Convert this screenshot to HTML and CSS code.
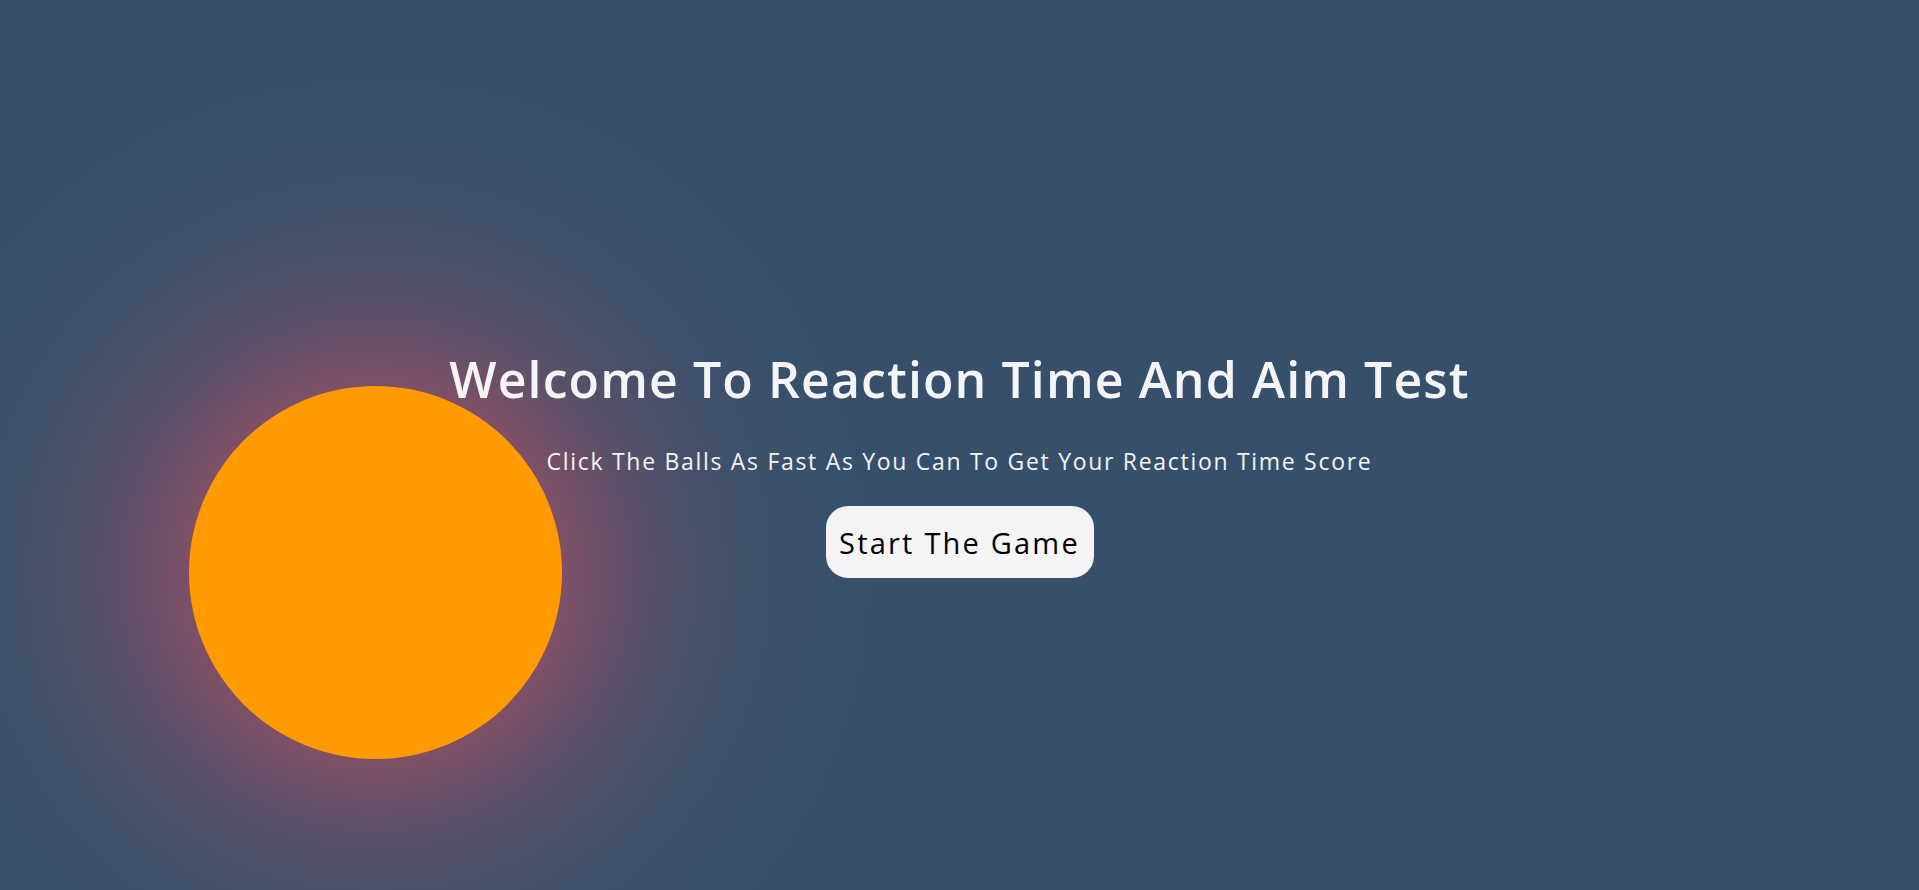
FILE: index.html
```html
<!DOCTYPE html>
<html lang="en">
<head>
<meta charset="utf-8">
<title>Reaction Time And Aim Test</title>
<link rel="stylesheet" href="styles.css">
</head>
<body>
<main class="stage">
  <div class="ball"></div>
  <section class="intro">
    <h1 class="title">Welcome To Reaction Time And Aim Test</h1>
    <p class="subtitle">Click The Balls As Fast As You Can To Get Your Reaction Time Score</p>
    <button class="start-btn" type="button">Start The Game</button>
  </section>
</main>
</body>
</html>
```
FILE: styles.css
```css
* { box-sizing: border-box; }
html {
  background: #36506b;
  height: 100%;
  overflow: hidden;
}
body {
  margin: 0;
  height: 100%;
  font-family: "Open Sans", "Lato", sans-serif;
  color: #f4f4f4;
}
.stage {
  position: relative;
  width: 100%;
  height: 100vh;
  overflow: hidden;
  isolation: isolate;
  background: #36506b;
}
.ball {
  position: absolute;
  left: 189px;
  top: 386px;
  width: 373px;
  height: 373px;
  border-radius: 50%;
  background: #ff9a00;
}
.ball::before {
  content: "";
  position: absolute;
  left: -313.5px;
  top: -313.5px;
  width: 1000px;
  height: 1000px;
  border-radius: 50%;
  z-index: -1;
  background: radial-gradient(circle closest-side,
    rgba(255, 80, 95, 0.36) 0px,
    rgba(255, 80, 95, 0.36) 186px,
    rgba(255, 80, 95, 0.28) 220px,
    rgba(255, 80, 95, 0.21) 250px,
    rgba(255, 80, 95, 0.125) 300px,
    rgba(255, 80, 95, 0.065) 350px,
    rgba(255, 80, 95, 0.03) 400px,
    rgba(255, 80, 95, 0.012) 450px,
    rgba(255, 80, 95, 0) 500px);
}
.intro {
  position: relative;
  display: flex;
  flex-direction: column;
  align-items: center;
  padding-top: 349px;
}
.title {
  margin: 0;
  font-size: 50px;
  line-height: 60px;
  font-weight: 600;
  letter-spacing: 1.1px;
  color: #f4f4f4;
}
.subtitle {
  margin: 36px 0 0;
  font-size: 23px;
  line-height: 33px;
  font-weight: 400;
  letter-spacing: 1.7px;
}
.start-btn {
  margin-top: 28px;
  height: 72px;
  width: 268px;
  border: none;
  border-radius: 22px;
  background: #f4f4f4;
  color: #000;
  font-family: inherit;
  font-size: 29px;
  letter-spacing: 2.2px;
  padding: 0;
}
```
